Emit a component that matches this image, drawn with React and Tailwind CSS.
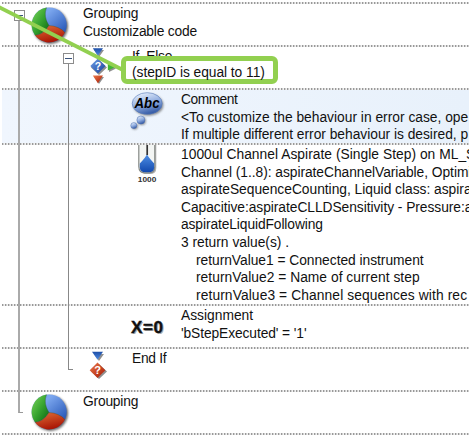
const GroupIcon = () => (
  <svg width="40" height="40" viewBox="0 0 40 40" className="block">
    <defs>
      <linearGradient id="gGreen" x1="0" y1="0" x2="1" y2="1">
        <stop offset="0" stopColor="#7fd65c" /><stop offset="0.5" stopColor="#38a531" /><stop offset="1" stopColor="#0b6410" />
      </linearGradient>
      <linearGradient id="gBlue" x1="0.3" y1="0" x2="1" y2="0.8">
        <stop offset="0.2" stopColor="#7ba6ee" /><stop offset="1" stopColor="#1c4db0" />
      </linearGradient>
      <linearGradient id="gRed" x1="0" y1="0" x2="0.4" y2="1">
        <stop offset="0" stopColor="#e0703a" /><stop offset="1" stopColor="#ab1705" />
      </linearGradient>
      <filter id="soft"><feGaussianBlur stdDeviation="0.8" /></filter>
    </defs>
    <circle cx="19.4" cy="19.2" r="17.7" fill="#333" opacity="0.7" filter="url(#soft)" />
    <circle cx="18.2" cy="17.9" r="17.5" fill="url(#gBlue)" />
    <path d="M15.6 .6A17.5 17.5 0 0 0 4 28.2Q12 28 18 18.6Q12 9 15.6 .6Z" fill="url(#gGreen)" />
    <path d="M4 28.2A17.5 17.5 0 0 0 33.9 25.5Q28 19 18 18.6Q12 28 4 28.2Z" fill="url(#gRed)" />
    <path d="M15.6 .6Q12 9 18 18.6Q28 19 33.9 25.5M18 18.6Q12 28 4 28.2" fill="none" stroke="#24451f" strokeWidth="0.6" opacity="0.5" />
  </svg>
);

const BranchDefs = () => (
  <defs>
    <linearGradient id="bBlue" x1="0" y1="0" x2="0" y2="1">
      <stop offset="0" stopColor="#1d4fa8" /><stop offset="1" stopColor="#4f8ae0" />
    </linearGradient>
    <linearGradient id="bDiamond" x1="0" y1="0" x2="1" y2="1">
      <stop offset="0" stopColor="#73a0e6" /><stop offset="1" stopColor="#123f9c" />
    </linearGradient>
    <linearGradient id="bRed" x1="0" y1="0" x2="1" y2="1">
      <stop offset="0" stopColor="#ee7a48" /><stop offset="1" stopColor="#a41604" />
    </linearGradient>
    <filter id="bSoft"><feGaussianBlur stdDeviation="0.7" /></filter>
  </defs>
);

const IfIcon = () => (
  <svg width="28" height="40" viewBox="0 0 28 40" className="block">
    <BranchDefs />
    <path d="M4 2H14L9 9ZM9 12L17 19.5L9 27L1 19.5ZM4 29H14L9 36ZM19 16L26 20.5L19 24Z" transform="translate(1 1)" fill="#444" opacity="0.6" filter="url(#bSoft)" />
    <path d="M3.8 1.3H14L8.9 8.8Z" fill="url(#bBlue)" />
    <path d="M8.9 11.5L16.5 19L8.9 26.5L1.3 19Z" fill="url(#bDiamond)" />
    <path d="M3.8 28.6H14L8.9 36.3Z" fill="url(#bRed)" />
    <path d="M18.8 16L26 20.2L18.8 23.5Z" fill="#42b535" />
    <text x="8.9" y="22.8" textAnchor="middle" fontFamily="Liberation Sans, sans-serif" fontWeight="700" fontSize="10.5" fill="#fff">?</text>
  </svg>
);

const EndIcon = () => (
  <svg width="20" height="32" viewBox="0 0 20 32" className="block">
    <path d="M4 3H14L9 10ZM9 13L17 20.5L9 28L1 20.5Z" transform="translate(1 1)" fill="#444" opacity="0.6" filter="url(#bSoft)" />
    <path d="M3 1.8H14L8.5 9.8Z" fill="url(#bBlue)" />
    <path d="M8.5 12.5L16.3 20.3L8.5 28L0.7 20.3Z" fill="url(#bRed)" />
    <text x="8.6" y="24.2" textAnchor="middle" fontFamily="Liberation Sans, sans-serif" fontWeight="700" fontSize="11" fill="#fff">?</text>
  </svg>
);

const CommentIcon = () => (
  <svg width="40" height="42" viewBox="0 0 40 42" className="block">
    <defs>
      <linearGradient id="cBub" x1="0.3" y1="0" x2="0.7" y2="1">
        <stop offset="0" stopColor="#e6effc" /><stop offset="0.5" stopColor="#8facdf" /><stop offset="1" stopColor="#284f9d" />
      </linearGradient>
      <filter id="cSoft"><feGaussianBlur stdDeviation="0.9" /></filter>
    </defs>
    <g fill="#444" opacity="0.6" filter="url(#cSoft)">
      <ellipse cx="20.4" cy="13.9" rx="15" ry="10.8" /><circle cx="13.8" cy="30" r="4" /><circle cx="6.8" cy="35.5" r="3" />
    </g>
    <ellipse cx="19.2" cy="12.5" rx="15" ry="10.8" fill="url(#cBub)" stroke="#5678b8" strokeWidth="0.6" />
    <circle cx="12.9" cy="29" r="4" fill="url(#cBub)" stroke="#456bb0" strokeWidth="0.5" />
    <circle cx="5.8" cy="34.6" r="3" fill="url(#cBub)" stroke="#456bb0" strokeWidth="0.5" />
    <text x="19" y="17.2" textAnchor="middle" textLength="25" lengthAdjust="spacingAndGlyphs" fontFamily="Liberation Sans, sans-serif" fontWeight="700" fontStyle="italic" fontSize="14.5" fill="#000">Abc</text>
  </svg>
);

const AspirateIcon = () => (
  <svg width="24" height="40" viewBox="0 0 24 40" className="block">
    <defs>
      <linearGradient id="aLiq" x1="0" y1="0" x2="0" y2="1">
        <stop offset="0" stopColor="#4f90e6" /><stop offset="1" stopColor="#1248ad" />
      </linearGradient>
    </defs>
    <path d="M5 -1V23Q5 29 10 29H14Q20.3 29 20.3 23V-1" fill="#666" opacity="0.5" />
    <path d="M2.8 -1V21.5Q3 27.8 8.5 27.8H13.5Q18.6 27.8 18.8 21.5V-1Z" fill="#f3f5f3" stroke="#858985" strokeWidth="1.2" />
    <path d="M11 9Q10 12 3.8 18.5V22.5Q4.2 27.3 9 27.3H13Q17.9 27.3 18.2 22.5V18.5Q12 12 11 9Z" fill="url(#aLiq)" />
    <path d="M11.2 0V10" stroke="#333" strokeWidth="1.7" />
    <text x="11" y="37" textAnchor="middle" textLength="18.5" lengthAdjust="spacingAndGlyphs" fontFamily="Liberation Sans, sans-serif" fontSize="8" fontWeight="700" fill="#333">1000</text>
  </svg>
);

const AssignIcon = () => (
  <svg width="40" height="24" viewBox="0 0 40 24" className="block">
    <g fontFamily="Liberation Sans, sans-serif" fontWeight="700" fontSize="17">
      <text x="2.2" y="18.2" textLength="32" lengthAdjust="spacing" fill="#aaa">X=0</text>
      <text x="1" y="17" textLength="32" lengthAdjust="spacing" fill="#111" stroke="#111" strokeWidth="0.4">X=0</text>
    </g>
  </svg>
);

const Divider = () => (
  <div className="h-[2px] shrink-0 bg-[repeating-linear-gradient(90deg,#999_0px,#999_1px,#cfcfcf_1px,#cfcfcf_2px,#f0f0f0_2px,#f0f0f0_3px)]" />
);

const Row = ({ height, indent, icon, iconTop, iconWidth, lines, tone = "" }) => (
  <>
    <Divider />
    <div className={`flex shrink-0 ${height} ${indent} ${tone}`}>
      <div className={`shrink-0 ${iconTop} ${iconWidth}`}>{icon}</div>
      <div className="pt-px">
        {lines.map(([text, cls]) => (
          <div key={text} className={`h-[17.6px] whitespace-pre ${cls}`}>{text}</div>
        ))}
      </div>
    </div>
  </>
);

const Toggle = () => (
  <div className="flex h-[11px] w-[11px] items-center justify-center border border-[#8c8c8c] bg-white">
    <div className="h-px w-[7px] bg-[#39537c]" />
  </div>
);

export default function App() {
  return (
    <div className="relative h-[438px] w-[469px] overflow-hidden bg-white font-['Liberation_Sans',Arial,sans-serif] text-[13.8px] leading-[17.6px] text-[#111]">
      <div className="flex flex-col pl-[2px] pt-[2px]">
        <Row height="h-[41px]" indent="pl-[29px]" iconTop="pt-[3px]" iconWidth="w-[52px]" icon={<GroupIcon />}
          lines={[["Grouping", "tracking-[-0.2px]"], ["Customizable code", "tracking-[-0.2px]"]]} />
        <Row height="h-[41px]" indent="pl-[87px]" iconTop="pt-0" iconWidth="w-[43px]" icon={<IfIcon />}
          lines={[["If, Else", "tracking-[-0.25px]"]]} />
        <Row height="h-[53px]" indent="pl-[126px]" iconTop="pt-px" iconWidth="w-[53px]" icon={<CommentIcon />} tone="bg-gradient-to-r from-[#f0f6fe] to-[#e8f1fb]"
          lines={[
            ["Comment", "tracking-[-0.5px]"],
            ["<To customize the behaviour in error case, ope", "tracking-[0px]"],
            ["If multiple different error behaviour is desired, p", "tracking-[-0.02px]"],
          ]} />
        <Row height="h-[159px]" indent="pl-[134px]" iconTop="pt-0" iconWidth="w-[45px]" icon={<AspirateIcon />}
          lines={[
            ["1000ul Channel Aspirate (Single Step) on ML_S", "tracking-[0.03px]"],
            ["Channel (1..8): aspirateChannelVariable, Optimi", "tracking-[-0.05px]"],
            ["aspirateSequenceCounting, Liquid class: aspira", "tracking-[-0.02px]"],
            ["Capacitive:aspirateCLLDSensitivity - Pressure:a", "tracking-[-0.05px]"],
            ["aspirateLiquidFollowing", "tracking-[-0.1px]"],
            ["3 return value(s) .", "tracking-[0px]"],
            ["returnValue1 = Connected instrument", "pl-[15px] tracking-[-0.03px]"],
            ["returnValue2 = Name of current step", "pl-[15px] tracking-[0.03px]"],
            ["returnValue3 = Channel sequences with rec", "pl-[15px] tracking-[0.1px]"],
          ]} />
        <Row height="h-[41px]" indent="pl-[128px]" iconTop="pt-[10px]" iconWidth="w-[51px]" icon={<AssignIcon />}
          lines={[["Assignment", "tracking-[0px]"], ["'bStepExecuted' = '1'", "tracking-[-0.1px]"]]} />
        <Row height="h-[41px]" indent="pl-[87px]" iconTop="pt-px" iconWidth="w-[43px]" icon={<EndIcon />}
          lines={[["End If", "tracking-[-0.3px]"]]} />
        <Row height="h-[41px]" indent="pl-[29px]" iconTop="pt-[2px]" iconWidth="w-[52px]" icon={<GroupIcon />}
          lines={[["Grouping", "tracking-[-0.2px]"]]} />
        <Divider />
      </div>

      {/* Tree connectors drawn over the rows */}
      <div className="absolute left-[18px] top-[20px] h-[393px] w-[5px] border-b border-l-2 border-b-[#999] border-l-[#aaa]" />
      <div className="absolute left-[68px] top-[63px] h-[307px] w-[5px] border-b border-l border-[#888]" />
      <div className="absolute left-[14px] top-[10px]"><Toggle /></div>
      <div className="absolute left-[63px] top-[53px]"><Toggle /></div>

      {/* Callout with its leader line */}
      <svg className="absolute left-0 top-0" width="130" height="80" viewBox="0 0 130 80">
        <path d="M-2 6.5L124 70.5" stroke="#92d050" strokeWidth="3.8" fill="none" />
      </svg>
      <div className="absolute left-[121px] top-[56px] h-[28px] w-[157px] rounded-[6px] border-[5px] border-[#92d050] bg-white pl-[6px] pt-[3px]">
        <span className="block whitespace-nowrap leading-[17px] tracking-[-0.05px]">(stepID is equal to 11)</span>
      </div>
    </div>
  );
}
